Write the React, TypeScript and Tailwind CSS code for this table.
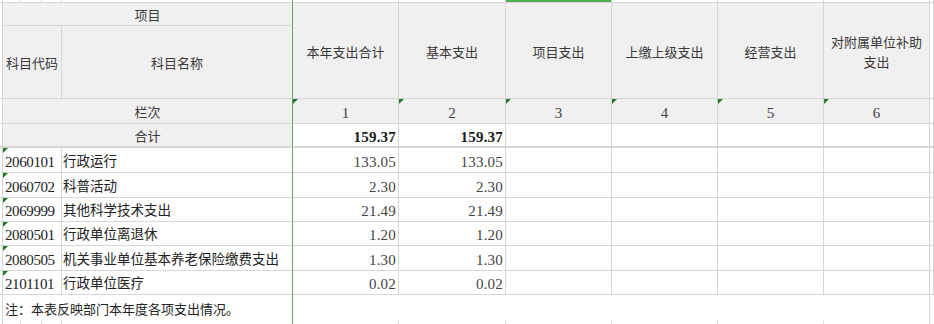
import React from 'react';

const dataRows = [
  { code: '2060101', name: '行政运行', total: '133.05', basic: '133.05' },
  { code: '2060702', name: '科普活动', total: '2.30', basic: '2.30' },
  { code: '2069999', name: '其他科学技术支出', total: '21.49', basic: '21.49' },
  { code: '2080501', name: '行政单位离退休', total: '1.20', basic: '1.20' },
  { code: '2080505', name: '机关事业单位基本养老保险缴费支出', total: '1.30', basic: '1.30' },
  { code: '2101101', name: '行政单位医疗', total: '0.02', basic: '0.02' },
];

const Flag = () => (
  <span className="absolute left-0 top-0 w-0 h-0 border-t-[5px] border-r-[5px] border-t-[#1f7a2a] border-r-transparent" />
);

type CellProps = {
  className?: string;
  green?: boolean;
  children?: React.ReactNode;
};

// plain cell: gray grid on right and bottom, green right edge on the freeze column
const Cell: React.FC<CellProps> = ({ className = '', green = false, children }) => (
  <div
    className={`relative border-r border-b border-b-[#d6d6d6] ${green ? 'border-r-[#5ea65e]' : 'border-r-[#d6d6d6]'} ${className}`}
  >
    {children}
  </div>
);

export default function App() {
  const cjk = "font-['Liberation_Serif','Noto_Sans_CJK_SC',serif]";
  const head = 'bg-[#f0f0f0] flex items-center justify-center pt-1 text-[13px] text-[#3a3a3a]';
  const num = 'bg-white flex items-center justify-end pr-[2px] pt-1 text-[15px] tracking-[0.2px]';
  const total = 'bg-white border-b-2 border-b-[#6aac6a]';
  return (
    <div className={`w-[934px] h-[324px] overflow-hidden bg-white ${cjk}`}>
      <div className="grid w-[934px] h-[324px] grid-cols-[3px_59px_231px_106px_107px_106px_106px_106px_106px_4px] grid-rows-[3px_23px_73px_25px_24px_25px_25px_24px_24px_25px_24px_26px_1fr]">
        {/* strip of the row above */}
        <Cell className="bg-white border-b-[#c4c4c4]" />
        <Cell className="bg-white border-b-[#c4c4c4] flex">
          <div className="w-[18px] border-r border-[#d6d6d6]" />
          <div className="w-[21px] border-r border-[#d6d6d6]" />
        </Cell>
        <Cell green className="bg-white border-b-[#c4c4c4]" />
        <Cell className="bg-white border-b-[#c4c4c4]" />
        <Cell className="bg-white border-b-[#c4c4c4]" />
        <Cell className="bg-[#4caf50] border-b-[#4caf50]" />
        <Cell className="bg-white border-b-[#c4c4c4]" />
        <Cell className="bg-white border-b-[#c4c4c4]" />
        <Cell className="bg-white border-b-[#c4c4c4]" />
        <Cell className="bg-white border-b-[#c4c4c4]" />

        {/* header: 项目 */}
        <Cell className="row-span-2 bg-white" />
        <Cell green className={`col-span-2 ${head}`}>
          项目
        </Cell>
        {['本年支出合计', '基本支出', '项目支出', '上缴上级支出', '经营支出'].map((h) => (
          <Cell key={h} className={`row-span-2 ${head}`}>
            {h}
          </Cell>
        ))}
        <Cell className={`row-span-2 ${head} leading-[20px] text-center`}>
          对附属单位补助
          <br />
          支出
        </Cell>
        <Cell className="row-span-2 bg-white" />

        <Cell className={head}>科目代码</Cell>
        <Cell green className={head}>
          科目名称
        </Cell>

        {/* 栏次 */}
        <Cell className="bg-white" />
        <Cell green className={`col-span-2 ${head}`}>
          栏次
        </Cell>
        {['1', '2', '3', '4', '5', '6'].map((n) => (
          <Cell key={n} className="bg-[#f0f0f0] flex items-center justify-center pt-1 text-[15px] text-[#444]">
            <Flag />
            {n}
          </Cell>
        ))}
        <Cell className="bg-white" />

        {/* 合计 */}
        <Cell className={total} />
        <Cell green className={`col-span-2 ${head} border-b-2 border-b-[#6aac6a]`}>
          合计
        </Cell>
        <Cell className={`${num} font-bold text-[#1a1a1a] border-b-2 border-b-[#6aac6a]`}>159.37</Cell>
        <Cell className={`${num} font-bold text-[#1a1a1a] border-b-2 border-b-[#6aac6a]`}>159.37</Cell>
        <Cell className={total} />
        <Cell className={total} />
        <Cell className={total} />
        <Cell className={total} />
        <Cell className={total} />

        {/* data rows */}
        {dataRows.map((r) => (
          <React.Fragment key={r.code}>
            <Cell className="bg-white" />
            <Cell className="bg-white flex items-center pl-[2px] pt-1 text-[15px] tracking-[-0.4px] text-[#222]">
              <Flag />
              {r.code}
            </Cell>
            <Cell green className="bg-white flex items-center pl-px pt-1 text-[13.5px] text-[#222]">
              {r.name}
            </Cell>
            <Cell className={`${num} text-[#444]`}>{r.total}</Cell>
            <Cell className={`${num} text-[#444]`}>{r.basic}</Cell>
            <Cell className="bg-white" />
            <Cell className="bg-white" />
            <Cell className="bg-white" />
            <Cell className="bg-white" />
            <Cell className="bg-white" />
          </React.Fragment>
        ))}

        {/* note */}
        <div className="border-r border-r-[#d6d6d6]" />
        <div className="col-span-2 border-r border-r-[#5ea65e] flex items-center pl-[2px] pt-1 text-[13px] text-[#222] whitespace-nowrap">
          注：本表反映部门本年度各项支出情况。
        </div>
        <div className="col-span-6 border-r border-r-[#d6d6d6]" />
        <div />

        {/* row below */}
        <div className="border-r border-r-[#d6d6d6]" />
        <div className="flex border-r border-r-[#d6d6d6]">
          <div className="w-[18px] border-r border-[#d6d6d6]" />
          <div className="w-[21px] border-r border-[#d6d6d6]" />
        </div>
        <div className="border-r border-r-[#5ea65e]" />
        <div className="border-r border-r-[#d6d6d6]" />
        <div className="border-r border-r-[#d6d6d6]" />
        <div className="border-r border-r-[#d6d6d6]" />
        <div className="border-r border-r-[#d6d6d6]" />
        <div className="border-r border-r-[#d6d6d6]" />
        <div className="border-r border-r-[#d6d6d6]" />
        <div />
      </div>
    </div>
  );
}
